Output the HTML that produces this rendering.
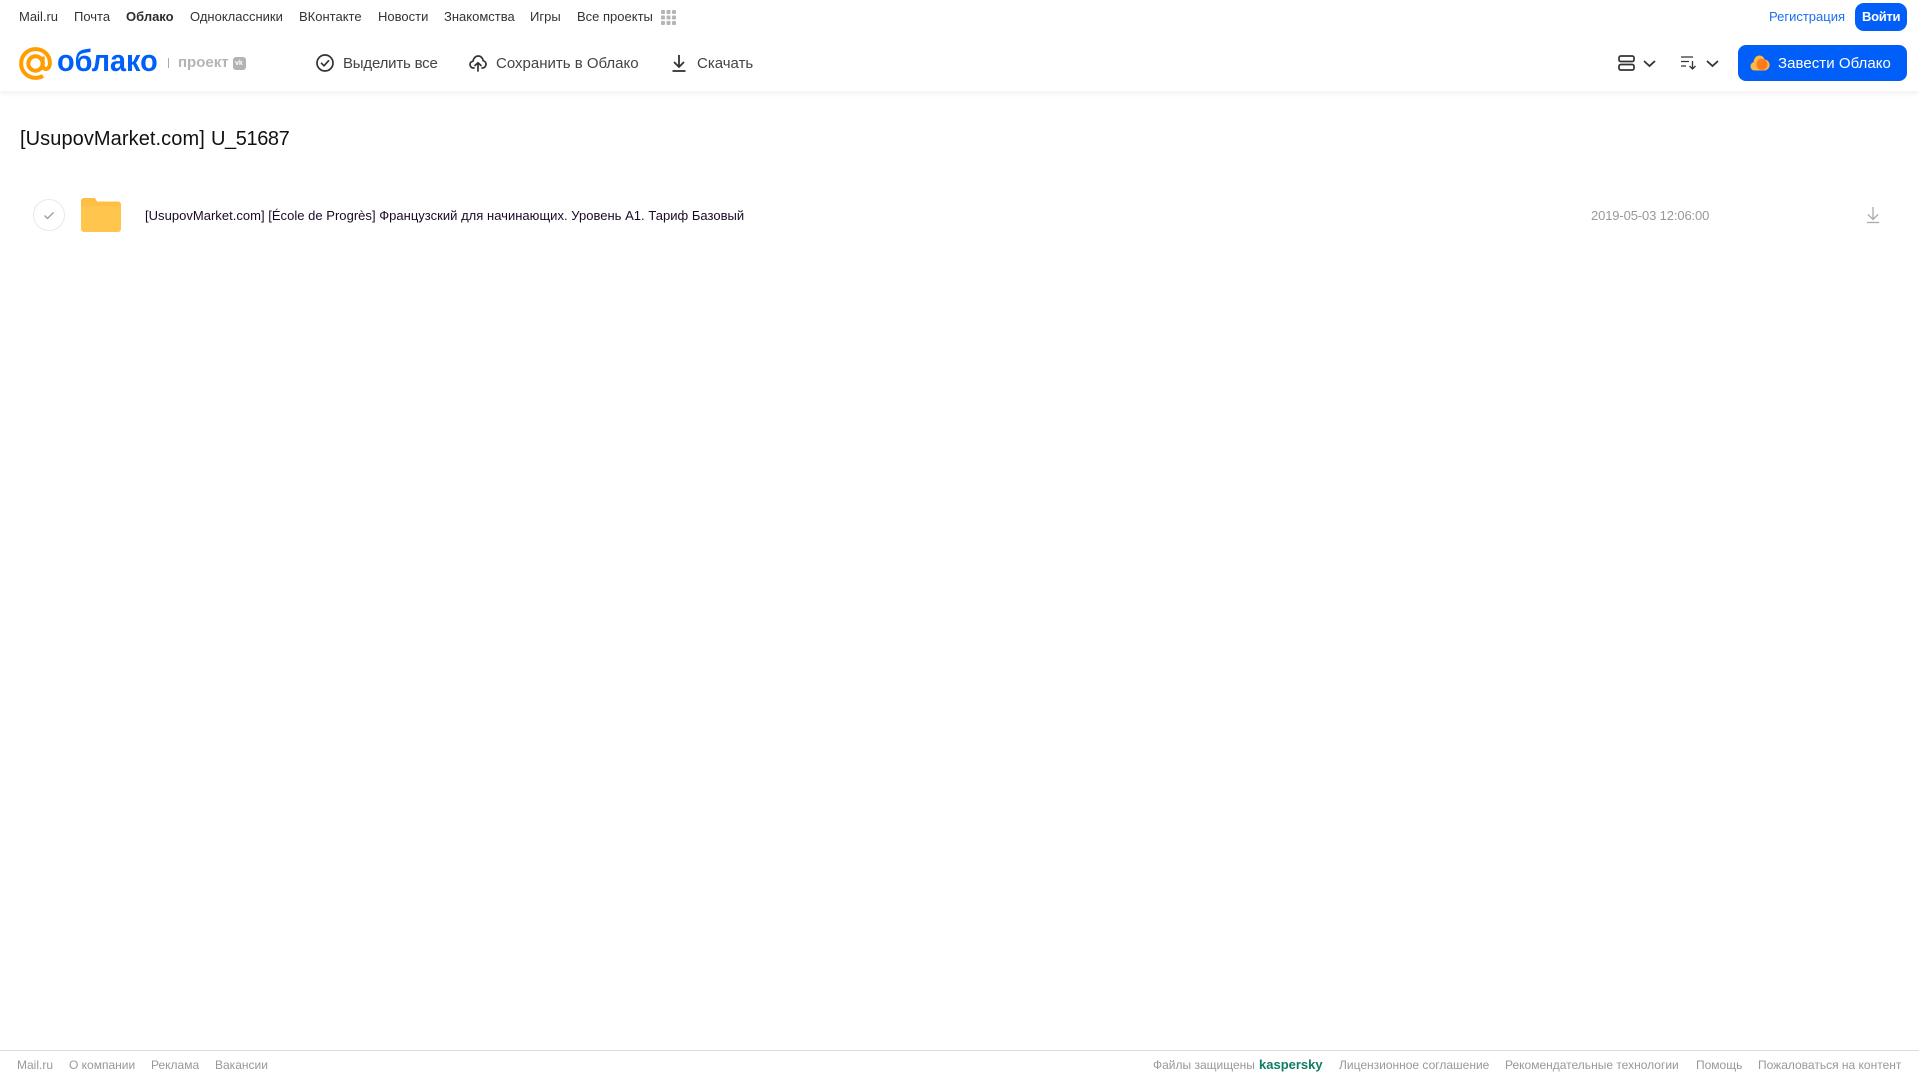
<!DOCTYPE html>
<html lang="ru"><head><meta charset="utf-8"><title>Облако</title>
<style>
html,body{margin:0;padding:0;background:#fff}
body{position:relative;width:1919px;height:1079px;overflow:hidden;font-family:"Liberation Sans",sans-serif}
.t{position:absolute;white-space:nowrap;line-height:20px}
.n{font-size:13px;color:#333;top:7px}
.a{font-size:15px;color:#444;top:54px}
.f{font-size:12px;color:#999;top:1055px}
svg{position:absolute;overflow:visible}
</style></head><body>
<div style="position:absolute;left:0;top:0;width:1919px;height:91px;background:#fff;box-shadow:0 2px 6px rgba(0,0,0,.07)"></div>
<span class="t n" style="left:19px">Mail.ru</span>
<span class="t n" style="left:74px">Почта</span>
<span class="t n" style="left:126px;font-weight:bold;color:#2c2d2e">Облако</span>
<span class="t n" style="left:190px">Одноклассники</span>
<span class="t n" style="left:299px">ВКонтакте</span>
<span class="t n" style="left:378px">Новости</span>
<span class="t n" style="left:444px">Знакомства</span>
<span class="t n" style="left:530px">Игры</span>
<span class="t n" style="left:577px">Все проекты</span>
<svg style="left:661px;top:10px" width="15" height="15" fill="#b5b5b5"><rect x="0" y="0" width="4" height="4" rx="1"/><rect x="5.5" y="0" width="4" height="4" rx="1"/><rect x="11" y="0" width="4" height="4" rx="1"/><rect x="0" y="5.5" width="4" height="4" rx="1"/><rect x="5.5" y="5.5" width="4" height="4" rx="1"/><rect x="11" y="5.5" width="4" height="4" rx="1"/><rect x="0" y="11" width="4" height="4" rx="1"/><rect x="5.5" y="11" width="4" height="4" rx="1"/><rect x="11" y="11" width="4" height="4" rx="1"/></svg>
<span class="t n" style="left:1769px;color:#1a6ff0">Регистрация</span>
<div style="position:absolute;left:1855px;top:3px;width:52px;height:28px;border-radius:9px;background:#005ff9"></div>
<span class="t n" style="left:1862px;color:#fff;font-weight:bold;letter-spacing:-.3px">Войти</span>

<svg style="left:19px;top:47px" width="33" height="33" viewBox="0 0 33 33" fill="none" stroke="#ff9e00" stroke-width="4"><circle cx="16.5" cy="16.5" r="7.2"/><path d="M23.7 9.5v9c0 5 7.200 5 7.200-2.500C30.900 8 24.500 2.100 16.500 2.100S2.100 8.500 2.100 16.500 8.500 30.900 16.500 30.900c3 0 5.500-.8 7.500-2"/></svg>
<span class="t" style="left:57px;top:43px;font-size:31px;line-height:36px;font-weight:bold;color:#005ff9;transform:scaleX(.93);transform-origin:0 50%">облако</span>
<div style="position:absolute;left:168px;top:58px;width:1px;height:10px;background:#aaa"></div>
<span class="t" style="left:178px;top:53px;font-size:15px;font-weight:bold;color:#b4b4b4">проект</span>
<div style="position:absolute;left:233px;top:57px;width:13px;height:13px;border-radius:3px;background:#b3b3b3"></div>
<span class="t" style="left:235px;top:58px;font-size:7px;line-height:11px;font-weight:bold;color:#fff">vk</span>

<svg style="left:316px;top:54px" width="18" height="18" viewBox="0 0 18 18" fill="none" stroke="#333" stroke-width="1.700"><circle cx="9" cy="9" r="8"/><path d="M5.500 9.300l2.500 2.500 4.500-5" stroke-linecap="round" stroke-linejoin="round"/></svg>
<span class="t a" style="left:343px;letter-spacing:-.2px">Выделить все</span>
<svg style="left:469px;top:54px" width="18" height="18" viewBox="0 0 18 18" fill="none" stroke="#333" stroke-width="1.700" stroke-linecap="round" stroke-linejoin="round"><path d="M5 14H4.500C2.500 14 1 12.500 1 10.500S2.500 7.500 4 7.300C4.500 3.800 6.800 2 9.200 2c2.600 0 4.600 2 5 4.800 1.700.2 2.800 1.800 2.800 3.500S15.600 14 13.500 14H13"/><path d="M9 17V9M6 11.500L9 8.800l3 2.700"/></svg>
<span class="t a" style="left:496px">Сохранить в Облако</span>
<svg style="left:672px;top:54px" width="14" height="18" viewBox="0 0 14 18" fill="none" stroke="#333" stroke-width="1.800"><path d="M7 1v11.500M2 8l5 5 5-5"/><path d="M.5 17h13"/></svg>
<span class="t a" style="left:697px">Скачать</span>

<svg style="left:1618px;top:55px" width="17" height="16" viewBox="0 0 17 16" fill="none" stroke="#333" stroke-width="1.700"><rect x="1" y="1" width="15" height="5.500" rx="1.800"/><rect x="1" y="9.500" width="15" height="5.500" rx="1.800"/></svg>
<svg style="left:1643px;top:60px" width="13" height="7" fill="none" stroke="#333" stroke-width="1.800"><path d="M1 1l5.500 5L12 1"/></svg>
<svg style="left:1681px;top:56px" width="16" height="14" viewBox="0 0 16 14" fill="none" stroke="#333" stroke-width="1.300"><path d="M0 1h12M0 5.500h8M0 10h5M11.500 5v8M8.500 10l3 3 3-3"/></svg>
<svg style="left:1706px;top:60px" width="13" height="7" fill="none" stroke="#333" stroke-width="1.800"><path d="M1 1l5.500 5L12 1"/></svg>
<div style="position:absolute;left:1738px;top:45px;width:169px;height:36px;border-radius:8px;background:#005ff9"></div>
<svg style="left:1750px;top:54px" width="20" height="18" viewBox="0 0 20 18"><path d="M4.500 16.500C2 16.500 .5 14.500 .5 12.300c0-2 1.300-3.600 3-4C4 4 6.500 1.500 9.300 1.500c2.700 0 4.600 1.700 5.300 4 2.800.2 5 2.500 5 5.500s-2.400 5.500-5.400 5.500z" fill="#ffb840"/><circle cx="12" cy="10.500" r="5.500" fill="#ff7a1f"/></svg>
<span class="t" style="left:1778px;top:54px;font-size:15px;color:#fff;letter-spacing:.05px">Завести Облако</span>

<span class="t" style="left:20px;top:127px;font-size:20px;line-height:24px;color:#111;letter-spacing:.08px">[UsupovMarket.com]</span>
<span class="t" style="left:211px;top:127px;font-size:20px;line-height:24px;color:#111;letter-spacing:-.4px">U_51687</span>

<svg style="left:33px;top:199px" width="32" height="32" fill="none"><circle cx="16" cy="16" r="15.500" stroke="#e9e9e9"/><path d="M11.500 16.500l3 3 6-6" stroke="#999" stroke-width="1.300"/></svg>
<svg style="left:81px;top:198px" width="40" height="34" viewBox="0 0 40 34"><path d="M0 3a3 3 0 013-3h9c2 0 3 1 4 3.500h21a3 3 0 013 3V31a3 3 0 01-3 3H3a3 3 0 01-3-3z" fill="#ffc54d"/><path d="M0 8h40V7a3 3 0 00-3-3H16L14 0H3a3 3 0 00-3 3z" fill="#ffbe45"/></svg>
<span class="t" style="left:145px;top:206px;font-size:13px;color:#1a0a2a;letter-spacing:.022px">[UsupovMarket.com] [École de Progrès] Французский для начинающих. Уровень А1. Тариф Базовый</span>
<span class="t" style="left:1591px;top:206px;font-size:13px;color:#999;letter-spacing:-.13px">2019-05-03 12:06:00</span>
<svg style="left:1866px;top:206px" width="14" height="18" viewBox="0 0 14 18" fill="none" stroke="#aaa" stroke-width="1.300"><path d="M7 1v12M2 8.500l5 5 5-5"/><path d="M1 16.500h12"/></svg>

<div style="position:absolute;left:0;top:1050px;width:1919px;height:1px;background:#ddd"></div>
<span class="t f" style="left:17px">Mail.ru</span>
<span class="t f" style="left:69px">О компании</span>
<span class="t f" style="left:151px">Реклама</span>
<span class="t f" style="left:215px">Вакансии</span>
<span class="t f" style="left:1153px">Файлы защищены</span>
<span class="t f" style="left:1259px;font-size:13px;font-weight:bold;color:#0f7d63">kaspersky</span>
<span class="t f" style="left:1339px">Лицензионное соглашение</span>
<span class="t f" style="left:1505px">Рекомендательные технологии</span>
<span class="t f" style="left:1696px">Помощь</span>
<span class="t f" style="left:1758px">Пожаловаться на контент</span>
</body></html>
